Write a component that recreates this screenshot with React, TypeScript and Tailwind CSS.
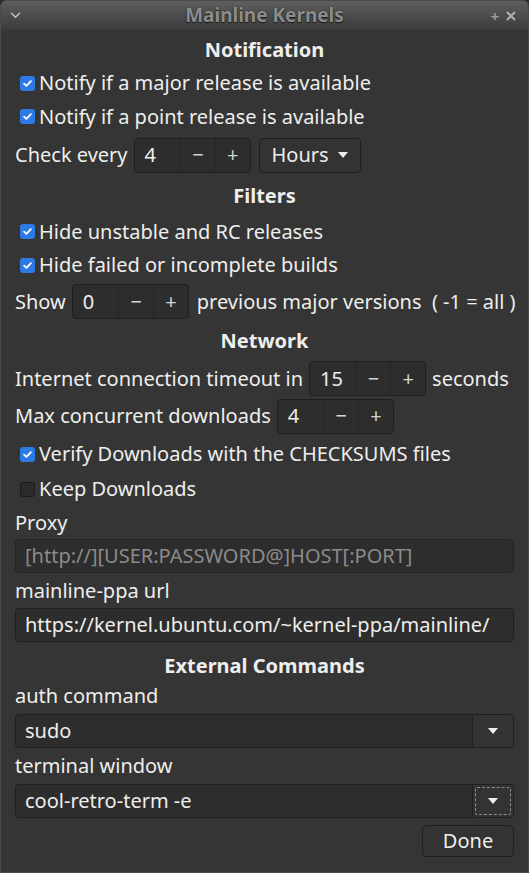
import React from 'react';

const font = { fontFamily: '"Noto Sans", "Open Sans", sans-serif' };

const Check = ({ checked, label, h = 'h-[34px]' }: { checked: boolean; label: string; h?: string }) => (
  <div className={`flex items-center pl-[5px] ${h}`}>
    {checked ? (
      <span className="flex h-[15px] w-[15px] items-center justify-center rounded-[3px] bg-[#2c7be5]">
        <svg viewBox="0 0 16 16" className="h-[11px] w-[11px]">
          <path d="M3 8.2 L6.4 11.4 L13 4.6" fill="none" stroke="#fff" strokeWidth="2.6" strokeLinecap="round" strokeLinejoin="round" />
        </svg>
      </span>
    ) : (
      <span className="h-[15px] w-[15px] rounded-[3px] border border-[#1b1b1b] bg-[#2b2b2b]" />
    )}
    <span className="ml-[4px]">{label}</span>
  </div>
);

const Spin = ({ value }: { value: string }) => (
  <div className="flex h-[35px] w-[117px] shrink-0 overflow-hidden rounded-[4px] border border-[#1f1f1f] bg-[#2d2d2d]">
    <div className="flex w-[46px] items-center pl-[10px]">{value}</div>
    <div className="flex w-[35px] items-center justify-center border-l border-[#262626] text-[#d4d4d4]">−</div>
    <div className="flex w-[35px] items-center justify-center border-l border-[#262626] text-[#d4d4d4]">+</div>
  </div>
);

const Arrow = () => (
  <svg viewBox="0 0 10 6" className="h-[6px] w-[10px]">
    <path d="M0 0 L10 0 L5 6 Z" fill="#eeeeec" />
  </svg>
);

const Header = ({ children, h }: { children: React.ReactNode; h: string }) => (
  <div className={`flex items-center justify-center font-bold ${h}`}>{children}</div>
);

const Combo = ({ value, focused }: { value: string; focused?: boolean }) => (
  <div className="flex h-[34px] overflow-hidden rounded-[4px] border border-[#1f1f1f] bg-[#2d2d2d]">
    <div className="flex flex-1 items-center pl-[9px]">{value}</div>
    <div className="flex w-[41px] items-center justify-center border-l border-[#1f1f1f] bg-[#333333] p-[2px]">
      <div className={`flex h-full w-full items-center justify-center ${focused ? 'border border-dashed border-[#8a8a8a] rounded-[2px]' : ''}`}>
        <Arrow />
      </div>
    </div>
  </div>
);

export default function App() {
  return (
    <div className="h-[873px] w-[529px] overflow-hidden bg-[#2b2b2b]" style={font}>
      <div className="flex h-full flex-col rounded-t-[6px] border border-[#4a4a4a] bg-[#353535] text-[20px] text-[#eeeeec]">
        {/* title bar */}
        <div className="relative flex h-[29px] shrink-0 items-center justify-center rounded-t-[5px] bg-gradient-to-b from-[#5e5e5e] to-[#3b3b3b]">
          <svg viewBox="0 0 12 8" className="absolute left-[9px] top-[11px] h-[7px] w-[11px]">
            <path d="M1 1 L6 6 L11 1" fill="none" stroke="#c8c8c8" strokeWidth="1.6" />
          </svg>
          <span className="text-[19px] font-bold text-[#8c8c8c] [text-shadow:0_0_1px_#1a1a1a,0_1px_1px_#1a1a1a]">Mainline Kernels</span>
          <span className="absolute right-[29px] top-[4px] text-[15px] font-bold text-[#9a9a9a]">+</span>
          <svg viewBox="0 0 10 10" className="absolute right-[12px] top-[10px] h-[10px] w-[10px]">
            <path d="M1 1 L9 9 M9 1 L1 9" stroke="#b0b0b0" strokeWidth="2" />
          </svg>
        </div>

        <div className="flex flex-col px-[14px] pt-[4px]">
          <Header h="h-[32px]">Notification</Header>
          <Check checked label="Notify if a major release is available" />
          <Check checked h="h-[33px]" label="Notify if a point release is available" />
          <div className="flex h-[44px] items-center">
            <span className="mr-[6px]">Check every</span>
            <Spin value="4" />
            <div className="ml-[8px] flex h-[35px] w-[102px] items-center justify-between rounded-[4px] border border-[#1f1f1f] bg-[#333333] pl-[12px] pr-[12px]">
              <span>Hours</span>
              <Arrow />
            </div>
          </div>
          <Header h="h-[38px]">Filters</Header>
          <Check checked h="h-[33px]" label="Hide unstable and RC releases" />
          <Check checked label="Hide failed or incomplete builds" />
          <div className="flex h-[39px] items-center whitespace-nowrap">
            <span className="mr-[6px]">Show</span>
            <Spin value="0" />
            <span className="ml-[8px]">previous major versions&nbsp;&nbsp;( -1 = all )</span>
          </div>
          <Header h="h-[40px]">Network</Header>
          <div className="flex h-[35px] items-center">
            <span className="mr-[6px]">Internet connection timeout in</span>
            <Spin value="15" />
            <span className="ml-[6px]">seconds</span>
          </div>
          <div className="flex h-[40px] items-center">
            <span className="mr-[6px]">Max concurrent downloads</span>
            <Spin value="4" />
          </div>
          <Check checked h="h-[36px]" label="Verify Downloads with the CHECKSUMS files" />
          <Check checked={false} label="Keep Downloads" />
          <div className="flex h-[33px] items-center">Proxy</div>
          <div className="flex h-[34px] items-center rounded-[4px] border border-[#232323] bg-[#2d2d2d] pl-[9px] text-[#8b8b8b]">
            [http://][USER:PASSWORD@]HOST[:PORT]
          </div>
          <div className="flex h-[35px] items-center">mainline-ppa url</div>
          <div className="flex h-[34px] items-center rounded-[4px] border border-[#1f1f1f] bg-[#2d2d2d] pl-[9px]">
            https://kernel.ubuntu.com/~kernel-ppa/mainline/
          </div>
          <Header h="h-[32px] mt-[8px]">External Commands</Header>
          <div className="flex h-[28px] items-center">auth command</div>
          <div className="mt-[4px]">
            <Combo value="sudo" />
          </div>
          <div className="flex h-[36px] items-center">terminal window</div>
          <Combo value="cool-retro-term -e" focused />
          <div className="mt-[7px] flex justify-end">
            <div className="flex h-[32px] w-[92px] items-center justify-center rounded-[4px] border border-[#1f1f1f] bg-[#333333]">
              Done
            </div>
          </div>
        </div>
      </div>
    </div>
  );
}
